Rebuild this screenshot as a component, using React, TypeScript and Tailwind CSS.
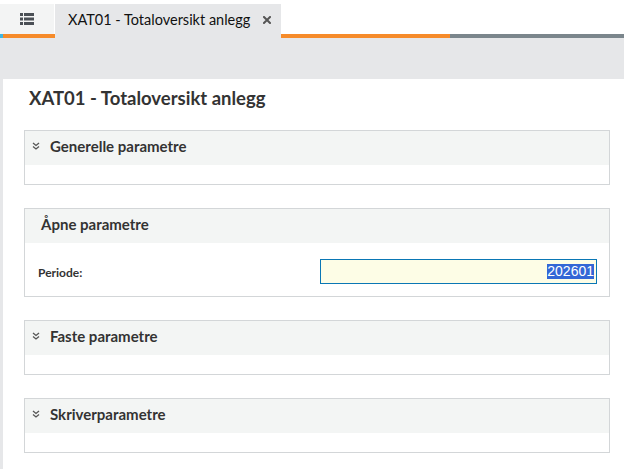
import React from "react";

function ListIcon() {
  return (
    <svg width="14" height="12" viewBox="0 0 14 12" fill="#4a4f55">
      <rect x="0" y="0" width="3" height="3" />
      <rect x="4" y="0" width="10" height="3" />
      <rect x="0" y="4.5" width="3" height="3" />
      <rect x="4" y="4.5" width="10" height="3" />
      <rect x="0" y="9" width="3" height="3" />
      <rect x="4" y="9" width="10" height="3" />
    </svg>
  );
}

function CloseIcon() {
  return (
    <svg width="8" height="8" viewBox="0 0 8 8" stroke="#555" strokeWidth="2" strokeLinecap="square">
      <path d="M1 1 L7 7 M7 1 L1 7" />
    </svg>
  );
}

function Chevrons() {
  return (
    <svg width="8" height="8" viewBox="0 0 8 8" fill="none" stroke="#555" strokeWidth="1.3">
      <path d="M1 1 L4 3.5 L7 1" />
      <path d="M1 4.5 L4 7 L7 4.5" />
    </svg>
  );
}

function Panel({ title, chevron = true, children, bodyClass = "h-[19px]" }: { title: string; chevron?: boolean; children?: React.ReactNode; bodyClass?: string }) {
  return (
    <div className="border border-[#d3d6d8]">
      <div className={`h-[34px] bg-[#f3f5f4] flex items-center pb-[4px] gap-[10px] ${chevron ? "pl-[7px]" : "pl-[16px]"}`}>
        {chevron ? <Chevrons /> : null}
        <span className="text-[15px] font-bold text-[#333] leading-[18px]">{title}</span>
      </div>
      <div className={bodyClass}>{children}</div>
    </div>
  );
}

export default function App() {
  return (
    <div className="w-[624px] h-[469px] bg-white overflow-hidden flex flex-col font-['Lato',sans-serif]">
      <div className="h-[4px] bg-white" />
      <div className="flex h-[34px]">
        <div className="w-[54px] flex flex-col">
          <div className="h-[30px] bg-[#f3f4f4] flex items-center justify-center">
            <ListIcon />
          </div>
          <div className="h-[4px] flex">
            <div className="w-[3px] bg-[#3fb6e0]" />
            <div className="flex-1 bg-[#f68b2a]" />
          </div>
        </div>
        <div className="w-[1px] flex flex-col">
          <div className="h-[30px] bg-white" />
          <div className="h-[4px] bg-[#f68b2a]" />
        </div>
        <div className="w-[226px] bg-[#e6e7e9] flex items-start pt-[7px] pl-[13px]">
          <span className="text-[14.5px] text-[#111] leading-[18px]">XAT01 - Totaloversikt anlegg</span>
          <span className="ml-[13px] mt-[5px]"><CloseIcon /></span>
        </div>
        <div className="flex-1 flex flex-col">
          <div className="h-[30px] bg-white" />
          <div className="h-[4px] flex">
            <div className="w-[169px] bg-[#f68b2a]" />
            <div className="flex-1 bg-[#7b868c]" />
          </div>
        </div>
      </div>
      <div className="h-[41px] bg-[#e6e7e9]" />
      <div className="flex flex-1">
        <div className="w-[3px] bg-[#e6e7e9]" />
        <div className="flex-1 bg-white pl-[21px] pr-[14px]">
          <h1 className="text-[18.5px] font-bold text-[#333] pl-[5px] pt-[7px] leading-[24px]">XAT01 - Totaloversikt anlegg</h1>
          <div className="mt-[20px] flex flex-col gap-[23px]">
            <Panel title="Generelle parametre" />
            <Panel title="Åpne parametre" chevron={false} bodyClass="h-[53px] flex items-center justify-between pl-[13px] pr-[12px]">
              <span className="text-[12px] font-bold text-[#333] mt-[6px]">Periode:</span>
              <div className="w-[277px] h-[25px] border border-[#0a77b5] bg-[#fdfde6] flex items-center justify-end pr-[2px] mt-[3px]">
                <span className="bg-[#3367d6] text-white text-[14px] font-['Liberation_Sans',sans-serif] leading-[15px]">202601</span>
              </div>
            </Panel>
            <Panel title="Faste parametre" />
            <Panel title="Skriverparametre" />
          </div>
        </div>
      </div>
    </div>
  );
}
